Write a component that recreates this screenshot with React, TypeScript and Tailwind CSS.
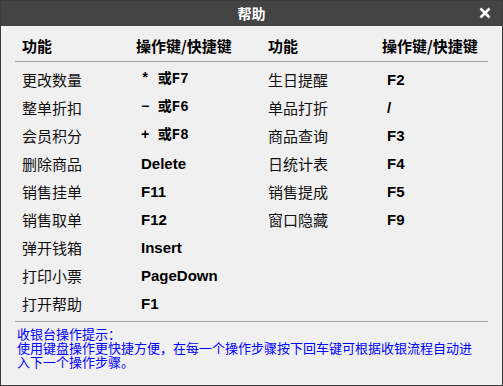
const CJK = "font-['Noto_Sans_CJK_SC',sans-serif]";

const LEFT: [string, string, boolean?][] = [
  ["更改数量", "* 或F7", true],
  ["整单折扣", "− 或F6", true],
  ["会员积分", "+ 或F8", true],
  ["删除商品", "Delete"],
  ["销售挂单", "F11"],
  ["销售取单", "F12"],
  ["弹开钱箱", "Insert"],
  ["打印小票", "PageDown"],
  ["打开帮助", "F1"],
];

const RIGHT: [string, string][] = [
  ["生日提醒", "F2"],
  ["单品打折", "/"],
  ["商品查询", "F3"],
  ["日统计表", "F4"],
  ["销售提成", "F5"],
  ["窗口隐藏", "F9"],
];

function Row({ label, keyText, serif }: { label: string; keyText: string; serif?: boolean }) {
  return (
    <div className="flex h-[28px] items-center">
      <span className={`w-[119px] text-[15px] leading-none text-[#111] ${CJK}`}>{label}</span>
      <span
        className={
          serif
            ? "whitespace-pre font-['Liberation_Mono','Noto_Sans_CJK_SC',monospace] text-[14px] font-bold leading-none text-black"
            : "font-['Liberation_Sans',Arial,sans-serif] text-[15px] font-bold leading-none text-black"
        }
      >
        {keyText}
      </span>
    </div>
  );
}

export default function App() {
  return (
    <div className="flex h-[386px] w-[503px] flex-col border border-[#3c3c3c] bg-[#f0f0f0]">
      {/* title bar */}
      <div className="relative flex h-[25px] shrink-0 items-center justify-center bg-[#444444]">
        <span className={`text-[14px] font-bold text-white ${CJK}`}>帮助</span>
        <svg
          className="absolute right-[11px] top-[6px]"
          width="12"
          height="12"
          viewBox="0 0 12 12"
        >
          <path d="M1.5 1.5 L10.5 10.5 M10.5 1.5 L1.5 10.5" stroke="white" strokeWidth="2.6" />
        </svg>
      </div>

      {/* header */}
      <div className={`flex pl-[21px] pt-[10px] text-[15px] font-bold leading-[20px] text-black ${CJK}`}>
        <span className="w-[114px]">功能</span>
        <span className="w-[132px]">操作键/快捷键</span>
        <span className="w-[114px]">功能</span>
        <span>操作键/快捷键</span>
      </div>
      <div className="mx-[14px] mt-[5px] h-px bg-[#a0a0a0]" />

      {/* shortcut table */}
      <div className="flex pl-[21px] pt-[3px]">
        <div className="w-[246px]">
          {LEFT.map(([l, k, s]) => (
            <Row key={l} label={l} keyText={k} serif={s} />
          ))}
        </div>
        <div>
          {RIGHT.map(([l, k]) => (
            <Row key={l} label={l} keyText={k} />
          ))}
        </div>
      </div>

      <div className="mx-[14px] mt-[4px] h-px bg-[#a0a0a0]" />

      {/* tip */}
      <div className={`whitespace-nowrap pl-[16px] pt-[5px] text-[13px] leading-[14px] text-[#0000ff] ${CJK}`}>
        收银台操作提示：
        <br />
        使用键盘操作更快捷方便，在每一个操作步骤按下回车键可根据收银流程自动进
        <br />
        入下一个操作步骤。
      </div>
    </div>
  );
}
